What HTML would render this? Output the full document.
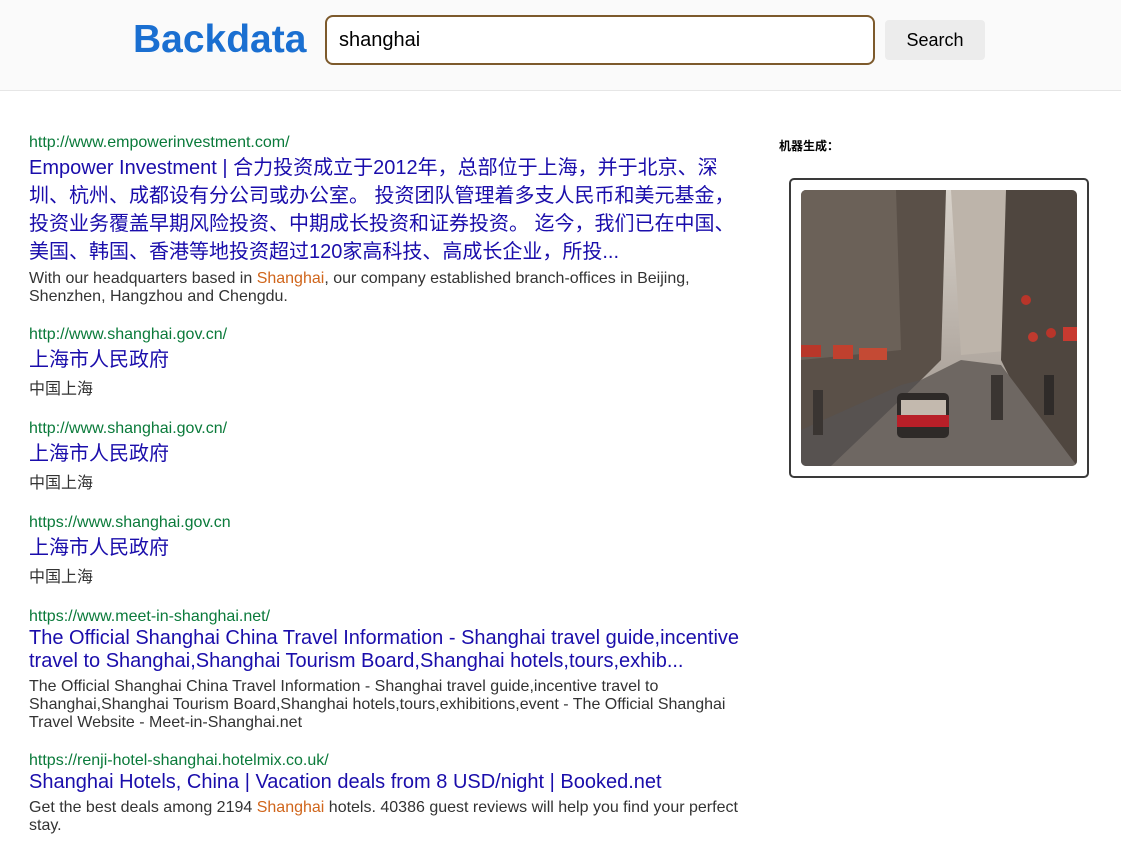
<!DOCTYPE html>
<html><head><meta charset="utf-8"><style>
*{margin:0;padding:0;box-sizing:border-box}
body{width:1121px;height:852px;background:#fff;font-family:"Liberation Sans","Noto Sans CJK SC",sans-serif;position:relative;overflow:hidden}
.hdr{position:absolute;left:0;top:0;width:1121px;height:91px;background:#fafafa;border-bottom:1px solid #e6e6e6}
.logo{position:absolute;left:133px;top:17px;font-size:39px;font-weight:bold;color:#1a6fd1;line-height:46px}
.inp{position:absolute;left:325px;top:15px;width:550px;height:50px;border:2px solid #7d5a2c;border-radius:8px;background:#fff;font-size:20px;line-height:46px;padding-left:12px;color:#000}
.btn{position:absolute;left:885px;top:20px;width:100px;height:40px;background:#ececec;border-radius:4px;font-size:18px;line-height:40px;text-align:center;color:#000}
.a{position:absolute;left:29px;white-space:nowrap}
.u{font-size:16px;line-height:18px;color:#0a7a3a}
.t{font-size:20px;color:#1a0dab}
.s{font-size:16px;line-height:18px;color:#333;width:740px;white-space:nowrap}
.h{color:#d0651b}
.lab{position:absolute;left:779px;top:138px;font-size:12px;font-weight:bold;line-height:16px}
.box{position:absolute;left:789px;top:178px;width:300px;height:300px;border:2px solid #3a3a3a;border-radius:5px}
.img{position:absolute;left:801px;top:190px;width:276px;height:276px;border-radius:5px;overflow:hidden}
</style></head><body>
<div class="hdr">
<div class="logo">Backdata</div>
<div class="inp">shanghai</div>
<div class="btn">Search</div>
</div>

<div class="a u" style="top:134px">http://www.empowerinvestment.com/</div>
<div class="a t" style="top:154px;line-height:28px">Empower Investment | 合力投资成立于2012年，总部位于上海，并于北京、深<br>圳、杭州、成都设有分公司或办公室。 投资团队管理着多支人民币和美元基金，<br>投资业务覆盖早期风险投资、中期成长投资和证券投资。 迄今，我们已在中国、<br>美国、韩国、香港等地投资超过120家高科技、高成长企业，所投...</div>
<div class="a s" style="top:270px">With our headquarters based in <span class="h">Shanghai</span>, our company established branch-offices in Beijing,<br>Shenzhen, Hangzhou and Chengdu.</div>

<div class="a u" style="top:326px">http://www.shanghai.gov.cn/</div>
<div class="a t" style="top:346px;line-height:28px">上海市人民政府</div>
<div class="a s" style="top:381px">中国上海</div>

<div class="a u" style="top:420px">http://www.shanghai.gov.cn/</div>
<div class="a t" style="top:440px;line-height:28px">上海市人民政府</div>
<div class="a s" style="top:475px">中国上海</div>

<div class="a u" style="top:514px">https://www.shanghai.gov.cn</div>
<div class="a t" style="top:534px;line-height:28px">上海市人民政府</div>
<div class="a s" style="top:569px">中国上海</div>

<div class="a u" style="top:608px">https://www.meet-in-shanghai.net/</div>
<div class="a t" style="top:627px;line-height:23px">The Official Shanghai China Travel Information - Shanghai travel guide,incentive<br>travel to Shanghai,Shanghai Tourism Board,Shanghai hotels,tours,exhib...</div>
<div class="a s" style="top:678px">The Official Shanghai China Travel Information - Shanghai travel guide,incentive travel to<br>Shanghai,Shanghai Tourism Board,Shanghai hotels,tours,exhibitions,event - The Official Shanghai<br>Travel Website - Meet-in-Shanghai.net</div>

<div class="a u" style="top:752px">https://renji-hotel-shanghai.hotelmix.co.uk/</div>
<div class="a t" style="top:771px;line-height:23px">Shanghai Hotels, China | Vacation deals from 8 USD/night | Booked.net</div>
<div class="a s" style="top:799px">Get the best deals among 2194 <span class="h">Shanghai</span> hotels. 40386 guest reviews will help you find your perfect<br>stay.</div>

<div class="lab">机器生成：</div>
<div class="box"></div>
<div class="img"><svg width="276" height="276" viewBox="0 0 276 276">
<defs><linearGradient id="sky" x1="0" y1="0" x2="0" y2="1"><stop offset="0" stop-color="#d8d2ca"/><stop offset="1" stop-color="#9a9088"/></linearGradient></defs>
<rect width="276" height="276" fill="url(#sky)"/>
<polygon points="150,0 220,0 215,160 160,165" fill="#bdb4aa"/>
<polygon points="0,0 145,0 140,170 120,190 0,250" fill="#5a5048"/>
<polygon points="0,0 95,0 100,160 0,170" fill="#6b6158"/>
<polygon points="205,0 276,0 276,276 230,230 200,170" fill="#4f463f"/>
<polygon points="0,276 120,190 160,170 200,175 276,276" fill="#6e6762"/>
<polygon points="0,276 0,240 100,195 120,190 30,276" fill="#575250"/>
<rect x="0" y="155" width="20" height="12" fill="#b8372a"/>
<rect x="32" y="155" width="20" height="14" fill="#c0402e"/>
<rect x="58" y="158" width="28" height="12" fill="#c44a34"/>
<circle cx="232" cy="147" r="5" fill="#c03a2e"/><circle cx="250" cy="143" r="5" fill="#b8352a"/>
<circle cx="225" cy="110" r="5" fill="#b8352a"/><rect x="262" y="137" width="14" height="14" fill="#c83a30"/>
<rect x="96" y="203" width="52" height="45" rx="5" fill="#2e2a28"/>
<rect x="100" y="210" width="45" height="15" fill="#c3b9ae"/>
<rect x="96" y="225" width="52" height="12" fill="#b81f28"/>
<rect x="190" y="185" width="12" height="45" fill="#3a3532"/>
<rect x="243" y="185" width="10" height="40" fill="#2f2b29"/>
<rect x="12" y="200" width="10" height="45" fill="#3a3532"/>
</svg></div>
</body></html>
